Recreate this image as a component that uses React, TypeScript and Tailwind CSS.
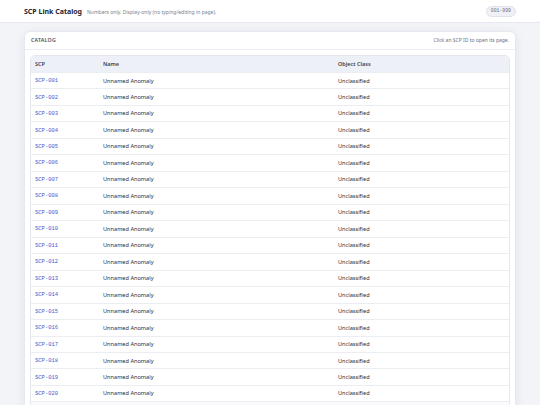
import React from "react";

type Entry = {
  id: string;
  name: string;
  objectClass: string;
};

const entries: Entry[] = Array.from({ length: 20 }, (_, i) => ({
  id: `SCP-${String(i + 1).padStart(3, "0")}`,
  name: "Unnamed Anomaly",
  objectClass: "Unclassified",
}));

const sans = "font-['Noto_Sans','Open_Sans',sans-serif]";
const mono = "font-['Liberation_Mono','DejaVu_Sans_Mono',monospace]";

function TopBar() {
  return (
    <header className="flex h-[23px] items-center justify-between border-b border-[#e6e8ef] bg-white px-[24px]">
      <div className="flex items-baseline gap-[5px]">
        <h1 className="text-[7px] leading-none font-bold text-[#1f2330]">
          SCP Link Catalog
        </h1>
        <span className="text-[5px] leading-none text-[#7a7f8f]">
          Numbers only. Display-only (no typing/editing in page).
        </span>
      </div>
      <span
        className={`${mono} flex h-[11px] items-center rounded-full border border-[#e0e3ec] bg-[#f0f1f7] px-[4px] text-[4.8px] text-[#6b7080]`}
      >
        001-999
      </span>
    </header>
  );
}

function CatalogTable() {
  return (
    <div className="overflow-hidden rounded-[5px] border border-[#e5e7ef]">
      <div className="flex h-[16px] items-center bg-[#eef0f7] text-[5.5px] font-semibold text-[#3b4050]">
        <div className="w-[68px] pl-[4px]">SCP</div>
        <div className="w-[235px] pl-[4px]">Name</div>
        <div className="flex-1 pl-[4px]">Object Class</div>
      </div>
      {entries.map((e) => (
        <div
          key={e.id}
          className="flex h-[16.47px] items-center border-t border-[#ebedf2] bg-white text-[5.6px] text-[#2a2e3a]"
        >
          <div className="w-[68px] pl-[4px]">
            <a href="#" className={`${mono} text-[5.5px] text-[#4a5bd1]`}>
              {e.id}
            </a>
          </div>
          <div className="w-[235px] pl-[4px]">{e.name}</div>
          <div className="flex-1 pl-[4px]">{e.objectClass}</div>
        </div>
      ))}
      {/* next row continues below the fold */}
      <div className="h-[16px] border-t border-[#ebedf2] bg-[#fafafd]" />
    </div>
  );
}

export default function App() {
  return (
    <div className={`${sans} h-[405px] overflow-hidden bg-[#f3f4f8]`}>
      <TopBar />
      <main className="px-[24px] pt-[8px]">
        <section className="rounded-[6px] border border-[#e6e8ef] bg-white pb-[6px] shadow-[0_2px_10px_rgba(30,35,60,0.08)]">
          <div className="flex h-[18px] items-center justify-between border-b border-[#eceef3] px-[6px]">
            <span className="text-[5.3px] font-semibold tracking-[0.2px] text-[#4a4f5e]">
              CATALOG
            </span>
            <span className="text-[5px] text-[#6b7080]">
              Click an SCP ID to open its page.
            </span>
          </div>
          <div className="px-[5px] pt-[5px]">
            <CatalogTable />
          </div>
        </section>
      </main>
    </div>
  );
}
